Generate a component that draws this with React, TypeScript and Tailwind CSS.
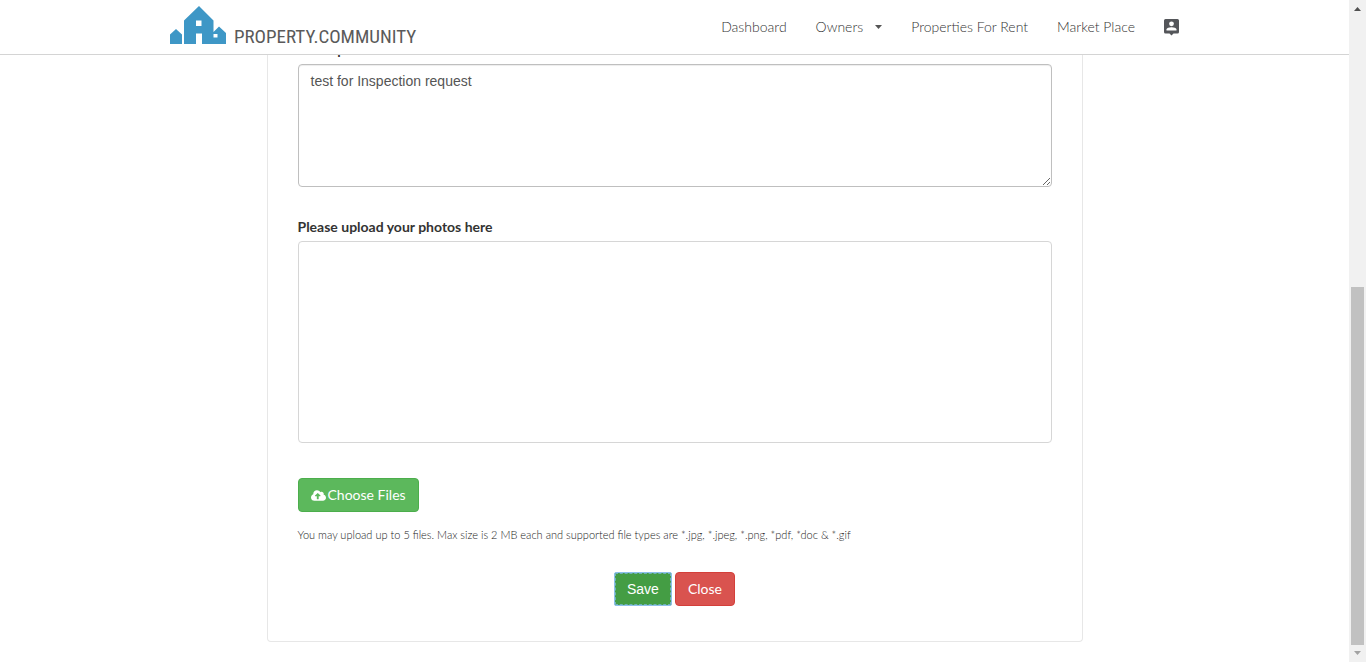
import React from "react";
import { FaCloudUploadAlt } from "react-icons/fa";

const navLink = "text-sm leading-5 font-light text-[#333] hover:text-black";

function Logo() {
  return (
    <a href="#home" className="flex items-end gap-2 pb-1">
      <svg width="56" height="38" viewBox="0 0 56 38" fill="#3e97c6" aria-hidden="true">
        <path d="M0 38V28.500L6 23L12 28.500V38Z" />
        <path
          fillRule="evenodd"
          d="M14 38V14.500L29 0L43.500 14.500V26L49 20.500L56 27V38H32V27.500H26V38ZM26 14.500V20H31.500V14.500ZM43.500 28V31.500H47.500V28Z"
        />
      </svg>
      <span className="font-['Roboto_Condensed','Liberation_Sans',sans-serif] text-[19px] leading-[14px] text-[#5a5a5a]">
        PROPERTY.COMMUNITY
      </span>
    </a>
  );
}

function Header() {
  return (
    <header className="sticky top-0 z-10 border-b border-[#d4d4d4] bg-white">
      <div className="mx-auto flex h-[54px] max-w-[1009px] items-center justify-between">
        <Logo />
        <nav className="flex items-center gap-[29px]">
          <a href="#dashboard" className={navLink}>Dashboard</a>
          <button type="button" className={"flex items-center gap-3 " + navLink}>
            Owners
            <svg width="7" height="4" viewBox="0 0 7 4" fill="#555" aria-hidden="true">
              <path d="M0 0H7L3.500 4Z" />
            </svg>
          </button>
          <a href="#rent" className={navLink}>Properties For Rent</a>
          <a href="#market" className={navLink}>Market Place</a>
          <a href="#account" aria-label="Account">
            <svg width="15" height="17" viewBox="0 0 15 17" aria-hidden="true">
              <path d="M1.500 0H13.500Q15 0 15 1.500V13Q15 14.500 13.500 14.500H9.500L7.500 16.500L5.500 14.500H1.500Q0 14.500 0 13V1.500Q0 0 1.500 0Z" fill="#54565a" />
              <circle cx="7.500" cy="4.800" r="2.400" fill="#fff" />
              <path d="M2.500 11.500V10.500C2.500 8.900 5.800 8.200 7.500 8.200S12.500 8.900 12.500 10.500V11.500Z" fill="#fff" />
            </svg>
          </a>
        </nav>
      </div>
    </header>
  );
}

function ScrollRail() {
  return (
    <div aria-hidden="true" className="sticky top-0 flex h-screen w-[17px] shrink-0 flex-col items-center bg-[#f1f1f1]">
      <svg width="17" height="17" viewBox="0 0 17 17" fill="#505050">
        <path d="M5 11L8.500 7L12 11Z" />
      </svg>
      <div className="flex w-[13px] flex-1 flex-col justify-end">
        <div className="h-[57%] bg-[#c1c1c1]" />
      </div>
      <svg width="17" height="17" viewBox="0 0 17 17" fill="#a3a3a3">
        <path d="M5 6L8.500 10L12 6Z" />
      </svg>
    </div>
  );
}

export default function App() {
  return (
    <div className="flex min-h-screen bg-white font-[Lato,sans-serif] text-sm text-[#333]">
      <div className="min-w-0 flex-1">
        <Header />
        <main className="-mt-[15px] pb-5">
          <form
            className="mx-auto max-w-[816px] rounded-b border border-t-0 border-[#e7e7e7] px-[30px] pb-[35px]"
            onSubmit={(e) => e.preventDefault()}
          >
            <label htmlFor="description" className="block leading-5 font-bold">Description</label>
            <textarea
              id="description"
              defaultValue="test for Inspection request"
              className="mt-1 block h-[123px] w-full resize-y rounded border border-[#bfbfbf] px-3 py-1.5 font-['Liberation_Sans',Arial,sans-serif] text-sm leading-5 text-[#555] shadow-[inset_0_1px_1px_rgba(0,0,0,0.075)] outline-none"
            />
            <h2 className="mt-[30px] leading-5 font-bold">Please upload your photos here</h2>
            <div className="mt-1 h-[202px] rounded border border-[#d6d6d6]" />
            <button
              type="button"
              className="mt-[35px] flex h-[34px] items-center gap-0.5 rounded border border-[#4cae4c] bg-[#5cb85c] px-3 text-white"
            >
              <FaCloudUploadAlt size={15} aria-hidden="true" />
              Choose Files
            </button>
            <p className="mt-[13px] text-[11px] leading-5 font-light text-[#222]">
              You may upload up to 5 files. Max size is 2 MB each and supported file types are *.jpg, *.jpeg, *.png, *pdf, *doc &amp; *.gif
            </p>
            <div className="mt-[27px] flex justify-center gap-[3px]">
              <button
                type="submit"
                className="h-[34px] rounded-xs border border-[#8cc0e8] bg-[#449d44] px-3 font-['Liberation_Sans',Arial,sans-serif] text-white outline-1 -outline-offset-2 outline-dashed outline-[#6fb0b8]"
              >
                Save
              </button>
              <button type="button" className="h-[34px] rounded border border-[#d43f3a] bg-[#d9534f] px-3 text-white">
                Close
              </button>
            </div>
          </form>
        </main>
      </div>
      <ScrollRail />
    </div>
  );
}
